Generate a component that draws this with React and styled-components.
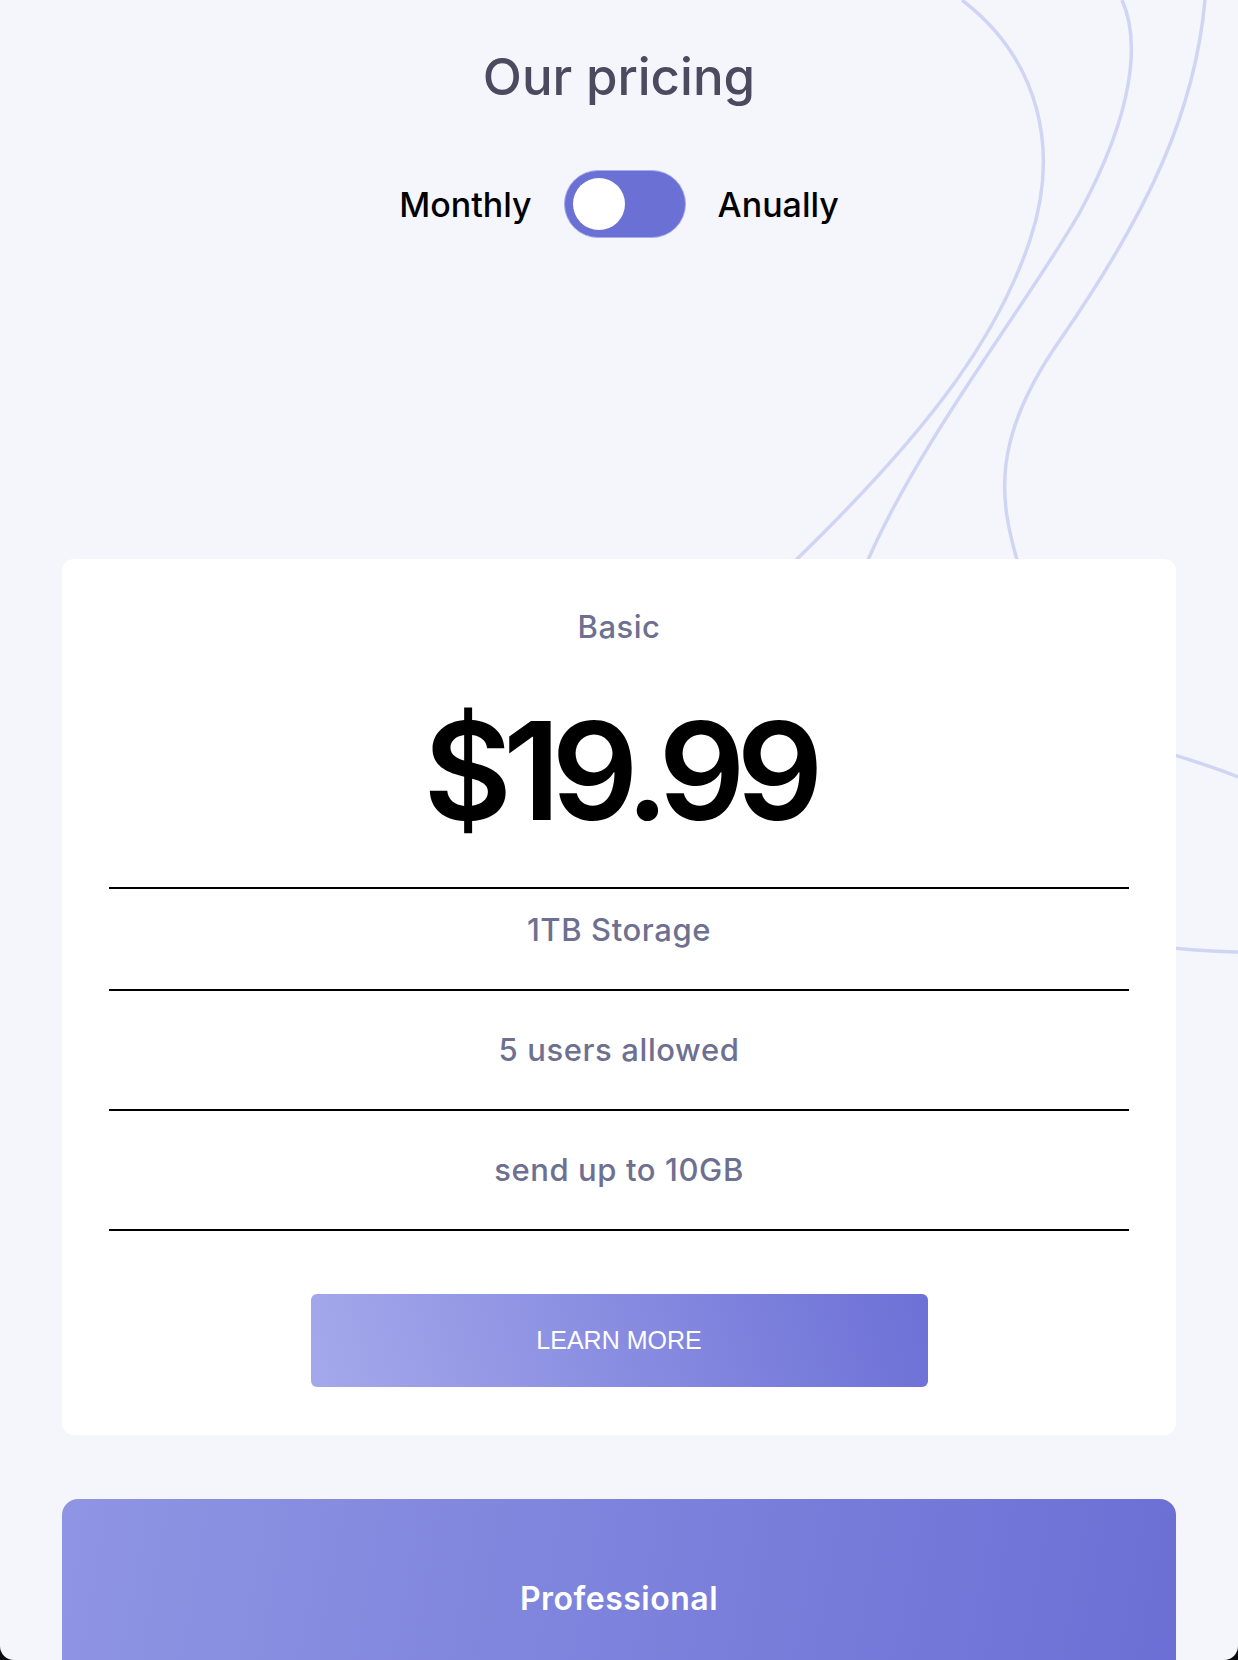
import React from 'react'
import styled, { createGlobalStyle } from 'styled-components'

const GlobalStyle = createGlobalStyle`
  html, body {
    margin: 0;
    padding: 0;
    background: #0b0b12;
  }
  * {
    box-sizing: border-box;
  }
`

const features = ['1TB Storage', '5 users allowed', 'send up to 10GB']

const Waves = () => (
  <WaveLayer viewBox='0 0 1238 1660' preserveAspectRatio='none'>
    <path d='M962 0 C1040 60 1060 150 1030 240 C1000 330 940 420 796 560 C700 660 1100 720 1238 777' />
    <path d='M1122 0 C1140 40 1135 110 1080 212 C1030 300 920 440 868 560 C820 700 700 900 600 1000' />
    <path d='M1205 0 C1195 110 1150 210 1060 340 C990 440 1000 500 1017 560 C1040 760 900 945 1238 952' />
  </WaveLayer>
)

const App = () => {
  return (
    <>
      <GlobalStyle />
      <Page>
        <Waves />
        <Content>
          <Header>
            <Title>Our pricing</Title>
            <ToggleRow>
              <ToggleLabel>Monthly</ToggleLabel>
              <Switch>
                <Knob />
              </Switch>
              <ToggleLabel>Anually</ToggleLabel>
            </ToggleRow>
          </Header>
          <Cards>
            <Card>
              <PlanName>Basic</PlanName>
              <Price>$19.99</Price>
              <FeatureList>
                {features.map((feature, index) => (
                  <Feature key={feature} first={index === 0}>{feature}</Feature>
                ))}
              </FeatureList>
              <LearnMore>LEARN MORE</LearnMore>
            </Card>
            <Card highlighted>
              <PlanName highlighted>Professional</PlanName>
            </Card>
          </Cards>
        </Content>
      </Page>
    </>
  )
}

export default App

const Page = styled.div`
  position: relative;
  height: 1660px;
  overflow: hidden;
  background: #f5f6fc;
  border-radius: 0 0 14px 14px;
  font-family: 'Inter', 'Noto Sans', sans-serif;
`

const WaveLayer = styled.svg`
  position: absolute;
  top: 0;
  left: 0;
  width: 1238px;
  height: 1660px;
  fill: none;
  stroke: #d0d5f4;
  stroke-width: 3.5;
`

const Content = styled.div`
  position: relative;
  z-index: 1;
  padding: 47px 62px 0;
`

const Header = styled.div`
  display: flex;
  flex-direction: column;
  align-items: center;
  gap: 63px;
`

const Title = styled.h1`
  margin: 0;
  font-size: 51px;
  line-height: 60px;
  font-weight: 500;
  color: #4b4b5f;
`

const ToggleRow = styled.div`
  display: flex;
  align-items: center;
  gap: 32px;
`

const ToggleLabel = styled.span`
  font-size: 34px;
  font-weight: 500;
  color: #000;
`

const Switch = styled.div`
  display: flex;
  align-items: center;
  width: 122px;
  height: 68px;
  padding: 0 8px;
  border-radius: 34px;
  background: #6b70d4;
  border: 1px solid #a9adf0;
`

const Knob = styled.div`
  width: 52px;
  height: 52px;
  border-radius: 50%;
  background: #fff;
`

const Cards = styled.div`
  display: flex;
  flex-direction: column;
  gap: 64px;
  margin-top: 321px;
`

const Card = styled.div`
  display: flex;
  flex-direction: column;
  align-items: center;
  padding: ${p => (p.highlighted ? '82px 47px 120px' : '50px 47px 48px')};
  border-radius: ${p => (p.highlighted ? '16px' : '12px')};
  background: ${p => (p.highlighted ? 'linear-gradient(100deg, #8f95e3 0%, #6b6fd5 100%)' : '#fff')};
`

const PlanName = styled.h2`
  margin: 0;
  font-size: ${p => (p.highlighted ? '32px' : '31px')};
  line-height: 36px;
  letter-spacing: 0.5px;
  font-weight: ${p => (p.highlighted ? 600 : 500)};
  color: ${p => (p.highlighted ? '#fff' : '#6e7091')};
`

const Price = styled.div`
  margin: 56px 0 46px;
  font-size: 136px;
  line-height: 140px;
  font-weight: 600;
  letter-spacing: -9px;
  color: #000;
`

const FeatureList = styled.ul`
  list-style: none;
  margin: 0;
  padding: 0;
  width: 100%;
  border-top: 2px solid #000;
`

const Feature = styled.li`
  padding: ${p => (p.first ? '23px 0 41px' : '41px 0')};
  border-bottom: 2px solid #000;
  text-align: center;
  font-size: 31px;
  line-height: 36px;
  letter-spacing: 0.6px;
  font-weight: 500;
  color: #6e7091;
`

const LearnMore = styled.button`
  margin-top: 63px;
  width: 617px;
  height: 93px;
  border: none;
  border-radius: 6px;
  background: linear-gradient(75deg, #a4a9eb 0%, #6d70d6 100%);
  color: #fff;
  font-family: 'Liberation Sans', Arial, sans-serif;
  font-size: 25px;
  cursor: pointer;
`
